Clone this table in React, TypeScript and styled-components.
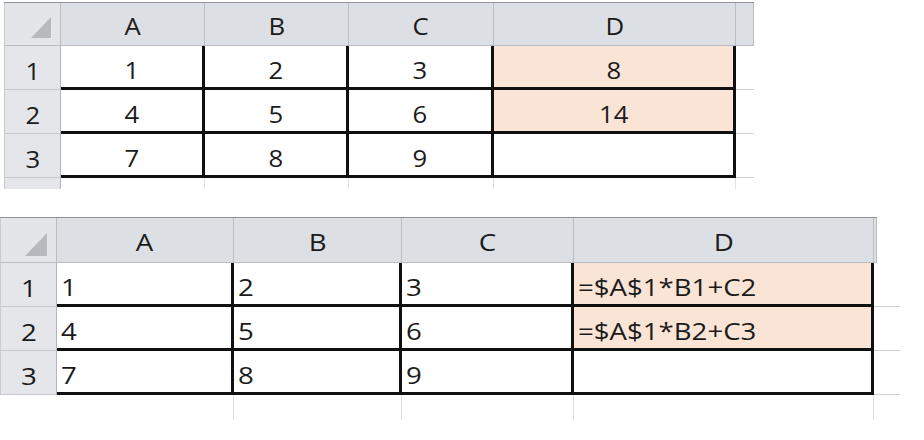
import React from "react";
import styled, { createGlobalStyle } from "styled-components";

const GlobalStyle = createGlobalStyle`
  html, body { margin: 0; padding: 0; background: #ffffff; }
  body { font-family: "Open Sans", "Liberation Sans", sans-serif; color: #1b1b1b; }
`;

const Page = styled.div`
  width: 924px;
  height: 440px;
  display: flex;
  flex-direction: column;
  padding-top: 2px;
  box-sizing: border-box;
  overflow: hidden;
`;

const Sheet = styled.div<{ $left: number; $top: number }>`
  display: flex;
  flex-direction: column;
  margin-left: ${(p) => p.$left}px;
  margin-top: ${(p) => p.$top}px;
  align-self: flex-start;
`;

const Row = styled.div<{ $h: number }>`
  display: flex;
  height: ${(p) => p.$h}px;
  align-self: flex-start;
`;

const HeaderRow = styled(Row)`
  border-top: 1px solid #8f9399;
`;

const Corner = styled.div<{ $w: number; $pr: number; $pb: number }>`
  width: ${(p) => p.$w}px;
  box-sizing: border-box;
  background: #e3e5e8;
  border-right: 1px solid #b9bdc3;
  border-bottom: 1px solid #b9bdc3;
  border-left: 1px solid #c9ccd1;
  display: flex;
  align-items: flex-end;
  justify-content: flex-end;
  padding: 0 ${(p) => p.$pr}px ${(p) => p.$pb}px 0;
`;

const CornerTriangle = styled.div<{ $s: number }>`
  width: 0;
  height: 0;
  border-left: ${(p) => p.$s}px solid transparent;
  border-bottom: ${(p) => p.$s + 1}px solid #b6babf;
`;

const ColHead = styled.div<{ $w: number }>`
  width: ${(p) => p.$w}px;
  box-sizing: border-box;
  background: #dcdfe3;
  border-right: 1px solid #b9bdc3;
  border-bottom: 1px solid #b9bdc3;
  display: flex;
  align-items: center;
  justify-content: center;
  padding-top: 3px;
  font-size: 24px;
  line-height: 1;
`;

const RowHead = styled.div<{ $w: number }>`
  width: ${(p) => p.$w}px;
  box-sizing: border-box;
  background: #e4e6e9;
  border-right: 1px solid #b3b7bd;
  border-bottom: 1px solid #c6c9ce;
  border-left: 1px solid #c9ccd1;
  display: flex;
  align-items: center;
  justify-content: center;
  padding-top: 6px;
  font-size: 24px;
  line-height: 1;
`;

const Cell = styled.div<{ $w: number; $fill?: boolean; $align: "center" | "left" }>`
  width: ${(p) => p.$w}px;
  box-sizing: border-box;
  background: ${(p) => (p.$fill ? "#fae4d5" : "#ffffff")};
  border-right: 3px solid #101010;
  border-bottom: 3px solid #101010;
  display: flex;
  align-items: center;
  justify-content: ${(p) => (p.$align === "center" ? "center" : "flex-start")};
  padding: 6px 0 0 ${(p) => (p.$align === "center" ? 0 : 4)}px;
  font-size: 24px;
  line-height: 1;
  white-space: nowrap;
`;

const Glyphs = styled.span<{ $sx: number; $origin: string }>`
  display: inline-block;
  transform: scaleX(${(p) => p.$sx});
  transform-origin: ${(p) => p.$origin};
`;

const Tail = styled.div<{ $w: number; $head?: boolean }>`
  width: ${(p) => p.$w}px;
  box-sizing: border-box;
  background: ${(p) => (p.$head ? "#dcdfe3" : "transparent")};
  border-right: ${(p) => (p.$head ? "1px solid #b9bdc3" : "none")};
  border-bottom: 1px solid ${(p) => (p.$head ? "#b9bdc3" : "#cfd1d4")};
`;

const StubHead = styled.div<{ $w: number; $gray: boolean }>`
  width: ${(p) => p.$w}px;
  box-sizing: border-box;
  background: ${(p) => (p.$gray ? "#e4e6e9" : "transparent")};
  border-right: 1px solid ${(p) => (p.$gray ? "#b3b7bd" : "transparent")};
  border-left: 1px solid ${(p) => (p.$gray ? "#c9ccd1" : "transparent")};
`;

const StubCell = styled.div<{ $w: number }>`
  width: ${(p) => p.$w}px;
  box-sizing: border-box;
  border-right: 1px solid #e0e1e3;
`;

type SheetSpec = {
  left: number;
  top: number;
  rowHeadW: number;
  cols: number[];
  headH: number;
  rowH: number;
  tailHeadW: number;
  tailW: number;
  stubH: number;
  stubGray: boolean;
  tri: number;
  triPr: number;
  triPb: number;
  align: "center" | "left";
  sx: number;
  data: string[][];
};

const LETTERS = ["A", "B", "C", "D"];

function SheetView({ s }: { s: SheetSpec }) {
  const origin = s.align === "center" ? "center" : "left";
  return (
    <Sheet $left={s.left} $top={s.top}>
      <HeaderRow $h={s.headH}>
        <Corner $w={s.rowHeadW} $pr={s.triPr} $pb={s.triPb}>
          <CornerTriangle $s={s.tri} />
        </Corner>
        {s.cols.map((w, i) => (
          <ColHead key={i} $w={w}>
            <Glyphs $sx={s.sx} $origin="center">{LETTERS[i]}</Glyphs>
          </ColHead>
        ))}
        <Tail $w={s.tailHeadW} $head />
      </HeaderRow>
      {s.data.map((r, ri) => (
        <Row key={ri} $h={s.rowH}>
          <RowHead $w={s.rowHeadW}>
            <Glyphs $sx={s.sx} $origin="center">{ri + 1}</Glyphs>
          </RowHead>
          {r.map((v, ci) => (
            <Cell key={ci} $w={s.cols[ci]} $fill={ci === 3 && ri < 2} $align={s.align}>
              <Glyphs $sx={s.sx} $origin={origin}>{v}</Glyphs>
            </Cell>
          ))}
          <Tail $w={s.tailW} />
        </Row>
      ))}
      <Row $h={s.stubH}>
        <StubHead $w={s.rowHeadW} $gray={s.stubGray} />
        {s.cols.map((w, i) => (
          <StubCell key={i} $w={w} />
        ))}
      </Row>
    </Sheet>
  );
}

const top: SheetSpec = {
  left: 4,
  top: 0,
  rowHeadW: 57,
  cols: [144, 144, 145, 242],
  headH: 43,
  rowH: 44,
  tailHeadW: 18,
  tailW: 18,
  stubH: 11,
  stubGray: true,
  tri: 20,
  triPr: 9,
  triPb: 7,
  align: "center",
  sx: 1.07,
  data: [
    ["1", "2", "3", "8"],
    ["4", "5", "6", "14"],
    ["7", "8", "9", ""],
  ],
};

const bottom: SheetSpec = {
  left: 0,
  top: 28,
  rowHeadW: 57,
  cols: [177, 168, 172, 300],
  headH: 45,
  rowH: 44,
  tailHeadW: 3,
  tailW: 26,
  stubH: 25,
  stubGray: false,
  tri: 22,
  triPr: 9,
  triPb: 6,
  align: "left",
  sx: 1.15,
  data: [
    ["1", "2", "3", "=$A$1*B1+C2"],
    ["4", "5", "6", "=$A$1*B2+C3"],
    ["7", "8", "9", ""],
  ],
};

export default function App() {
  return (
    <>
      <GlobalStyle />
      <Page>
        <SheetView s={top} />
        <SheetView s={bottom} />
      </Page>
    </>
  );
}
